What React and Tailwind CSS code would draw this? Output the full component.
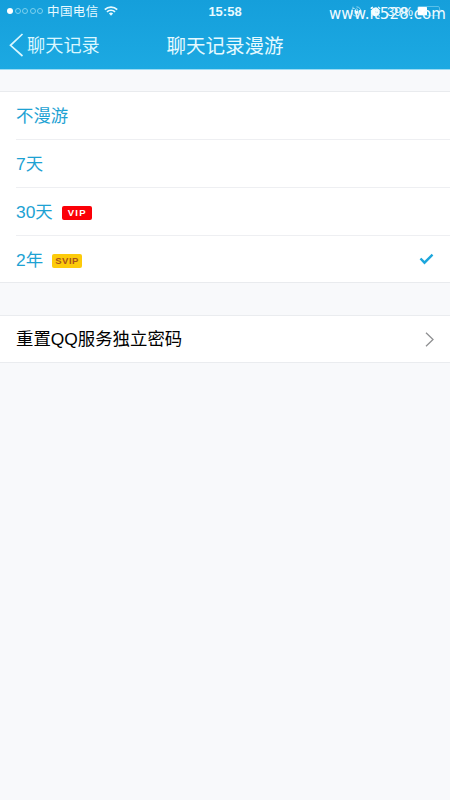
import React from "react";

const options = [
  { label: "不漫游" },
  { label: "7天" },
  { label: "30天", badge: "VIP", badgeClass: "bg-[#fb0007] text-white tracking-[1.2px] pl-[1px]" },
  {
    label: "2年",
    badge: "SVIP",
    badgeClass: "bg-[#fdcb0a] text-[#a9531a] tracking-[0.5px]",
    selected: true,
  },
];

const WifiIcon = () => (
  <svg className="w-[14px] h-[10px]" viewBox="0 0 14 10" fill="none" stroke="#e8faff" strokeWidth="1.7">
    <path d="M0.8 3.6a8.8 8.8 0 0 1 12.4 0" />
    <path d="M3 5.9a5.7 5.7 0 0 1 8 0" />
    <path d="M7 9.7 4.9 7.6a3 3 0 0 1 4.2 0z" fill="#e8faff" stroke="none" />
  </svg>
);

const RotationLockIcon = () => (
  <svg className="w-[11px] h-[11px]" viewBox="0 0 11 11" fill="none" stroke="#b5e6f7" strokeWidth="0.8">
    <path d="M2 2.2a4.7 4.7 0 1 0 3.5-1.4M2 0.7v1.8h1.8" />
    <rect x="3.7" y="5" width="3.6" height="2.7" fill="#e8faff" stroke="none" />
    <path d="M4.4 5V4a1.1 1.1 0 0 1 2.2 0v1" />
  </svg>
);

const AlarmIcon = () => (
  <svg className="w-[11px] h-[11px]" viewBox="0 0 11 11" fill="none">
    <circle cx="5.5" cy="5.9" r="4.3" fill="#f4fdff" />
    <path d="M0.8 2.7 2.9 0.9M10.2 2.7 8.1 0.9M2.3 9.2 1.5 10.5M8.7 9.2l0.8 1.3" stroke="#e8faff" strokeWidth="1.2" />
    <path d="M5.5 3.4v2.8h2" stroke="#17a2df" strokeWidth="0.8" />
  </svg>
);

const BatteryIcon = () => (
  <svg className="w-[25px] h-[10px]" viewBox="0 0 25 10" fill="none">
    <rect x="0.5" y="0.5" width="22" height="9" rx="1.5" stroke="#6cc8ec" strokeWidth="0.8" />
    <rect x="1" y="1" width="9" height="8" rx="0.5" fill="#fff" />
    <path d="M23.6 3.3a1.8 1.8 0 0 1 0 3.4z" fill="#8cd3f0" />
  </svg>
);

const StatusBar = () => (
  <div className="relative h-[22px] flex items-center justify-between pl-[7px] pr-[8px] text-[#e8faff]">
    <div className="flex items-center">
      <div className="flex gap-[1.5px] mr-[4px]">
        <span className="w-[6px] h-[6px] rounded-full bg-white" />
        {[1, 2, 3, 4].map((dot) => (
          <span key={dot} className="w-[6px] h-[6px] rounded-full border border-[#7cd0ee]" />
        ))}
      </div>
      <span className="mt-[2px] text-[12.5px] leading-none tracking-[0.4px] mr-[5px]">中国电信</span>
      <WifiIcon />
    </div>
    <div className="flex items-center">
      <RotationLockIcon />
      <span className="w-[8px]" />
      <AlarmIcon />
      <span className="text-[13px] leading-none ml-[6px] mr-[4px]">39%</span>
      <BatteryIcon />
    </div>
    <span className="absolute left-0 right-0 text-center text-[13px] font-bold leading-none">
      15:58
    </span>
    {/* Site watermark */}
    <span className="absolute left-[329px] top-[5px] text-[15px] leading-[18px] tracking-[0.1px] whitespace-nowrap text-[#f0fbff] font-['DejaVu_Sans',sans-serif]">
      www.it528.com
    </span>
  </div>
);

const NavBar = () => (
  <div className="relative h-[47px] flex items-center pl-[9px] text-[#d9f7ff]">
    <svg className="w-[15px] h-[24px] -mt-px" viewBox="0 0 15 24" fill="none" stroke="currentColor" strokeWidth="1.7">
      <path d="M13.5 1 1.5 12.3 13.5 23" />
    </svg>
    <span className="ml-[3px] mt-px text-[18.2px] leading-none">聊天记录</span>
    <h1 className="absolute left-0 right-0 mt-[2px] text-center text-[19.5px] leading-none text-[#e6faff]">
      聊天记录漫游
    </h1>
  </div>
);

const OptionRow = ({ option, last }) => (
  <div
    className={`ml-4 flex items-center pr-[16px] ${
      last ? "h-[46px]" : "h-[48px] border-b border-[#eeeff2]"
    }`}
  >
    <span className="mt-[3px] text-[17.4px] leading-none text-[#1da2d3]">{option.label}</span>
    {option.badge && (
      <span
        className={`ml-[9px] mt-[3px] w-[30px] h-[14px] rounded-[2px] flex items-center justify-center text-[9.5px] leading-none font-bold ${option.badgeClass}`}
      >
        {option.badge}
      </span>
    )}
    {option.selected && (
      <svg className="ml-auto w-[15px] h-[12px]" viewBox="0 0 15 12" fill="none" stroke="#1ca6dc" strokeWidth="2.4">
        <path d="M1.5 5.5 5.5 9.7 13.5 1.7" />
      </svg>
    )}
  </div>
);

export default function App() {
  return (
    <div className="w-full h-[800px] overflow-hidden bg-[#f8f9fb] font-['Liberation_Sans','Noto_Sans_CJK_SC',sans-serif]">
      <header className="h-[70px] bg-gradient-to-b from-[#159fdb] to-[#1ca9e2] border-b border-[#9ddcf4]">
        <StatusBar />
        <NavBar />
      </header>

      <section className="mt-[21px] bg-white border-y border-[#e9ebee]">
        {options.map((option, i) => (
          <OptionRow key={option.label} option={option} last={i === options.length - 1} />
        ))}
      </section>

      <section className="mt-[32px] h-[48px] bg-white border-y border-[#eaecef] pl-4 pr-[16px] flex items-center justify-between">
        <span className="mt-[2px] text-[17.4px] leading-none text-black">重置QQ服务独立密码</span>
        <svg className="w-[9px] h-[15px]" viewBox="0 0 9 15" fill="none" stroke="#8f9092" strokeWidth="1.3">
          <path d="M1 0.8 8 7.5 1 14.2" />
        </svg>
      </section>
    </div>
  );
}
